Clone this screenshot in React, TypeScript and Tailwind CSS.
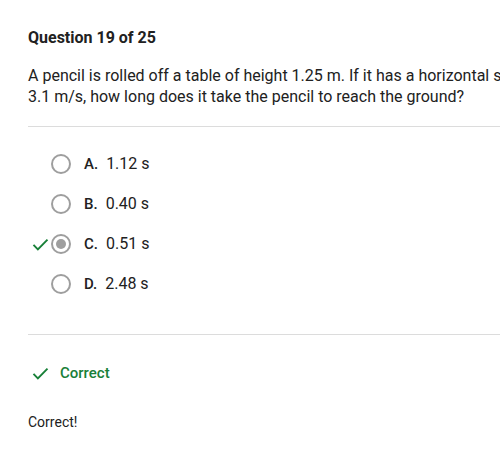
import React from 'react';

const options = [
  { letter: 'A.', text: '1.12 s', selected: false },
  { letter: 'B.', text: '0.40 s', selected: false },
  { letter: 'C.', text: '0.51 s', selected: true },
  { letter: 'D.', text: '2.48 s', selected: false },
];

function Check({ className }: { className?: string }) {
  return (
    <svg viewBox="0 0 24 24" className={className} fill="none" stroke="currentColor" strokeWidth={2.2}>
      <path d="M4 12.5l5 5L20 6.5" />
    </svg>
  );
}

export default function App() {
  return (
    <div className="w-[500px] h-[454px] overflow-hidden bg-white" style={{ fontFamily: 'Roboto, "Liberation Sans", sans-serif' }}>
      <div className="w-[600px] pl-7 pt-[28px] text-[#212121]">
        <h1 className="text-[16px] font-bold leading-5">Question 19 of 25</h1>
        <p className="mt-[17px] w-[540px] text-[16px] leading-[21px]">
          A pencil is rolled off a table of height 1.25 m. If it has a horizontal speed of 3.1 m/s, how long does it take the pencil to reach the ground?
        </p>
        <div className="mt-[19px] h-px bg-[#dcdcdc]" />
        <div className="pt-[17px] flex flex-col">
          {options.map((o) => (
            <div key={o.letter} className="h-10 flex items-center relative">
              {o.selected && <Check className="absolute left-[2px] w-[21px] h-[21px] text-[#188038]" />}
              <div className="ml-[23px] w-[20px] h-[20px] rounded-full border-2 border-[#9e9e9e] flex items-center justify-center">
                {o.selected && <div className="w-[10px] h-[10px] rounded-full bg-[#9e9e9e]" />}
              </div>
              <span className="ml-[13px] text-[15px] font-medium">{o.letter}</span>
              <span className="ml-2 text-[16px]">{o.text}</span>
            </div>
          ))}
        </div>
        <div className="mt-[30px] h-px bg-[#dcdcdc]" />
        <div className="mt-[27px] flex items-center text-[#188038]">
          <Check className="w-[21px] h-[21px] ml-[2px]" />
          <span className="ml-[9px] text-[15px] font-medium">Correct</span>
        </div>
        <p className="mt-[27px] text-[14px]">Correct!</p>
      </div>
    </div>
  );
}
